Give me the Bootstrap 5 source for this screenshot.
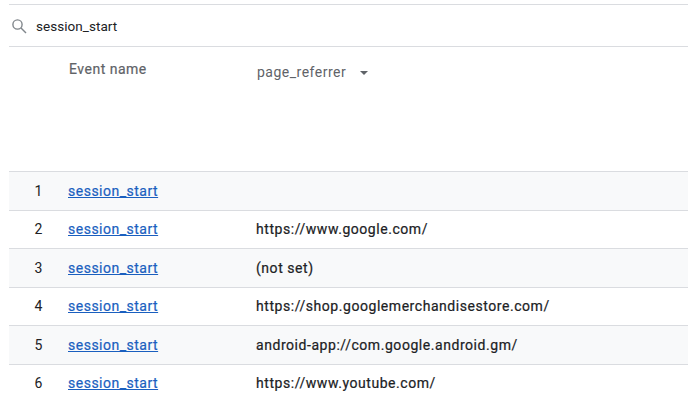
<!doctype html>
<html lang="en"><head><meta charset="utf-8">
<link href="https://cdn.jsdelivr.net/npm/bootstrap@5.3.0/dist/css/bootstrap.min.css" rel="stylesheet">
<style>
html,body{height:404px;overflow:hidden;background:#fff}
body{font-family:Roboto,"Liberation Sans",sans-serif;font-size:14px;padding:4px 0 0 9px;color:#202124}
.ga-search{height:43px;border-top:1px solid #dadce0;border-bottom:1px solid #dadce0;font-size:13.5px;letter-spacing:.05px;padding-top:1px}
.ga-search svg{margin:0 9px 0 2px}
.ga-head{height:124px;color:#5f6368;letter-spacing:.5px}
.ga-evname{width:248px;padding:14px 0 0 60px;-webkit-text-stroke:.2px #5f6368;line-height:16px}
.ga-dim{padding-top:17px;line-height:16px;letter-spacing:.5px}
.ga-caret{display:inline-block;border-left:4px solid transparent;border-right:4px solid transparent;border-top:4px solid #5f6368;margin-left:10px;vertical-align:2px}
.ga-row{height:38.5px;border-top:1px solid #dadce0;letter-spacing:.55px;padding-top:1px;-webkit-text-stroke:.2px #202124}
.ga-row.ga-alt{background:#f8f9fa}
.ga-row:last-child{border-bottom:1px solid #dadce0;height:39px}
.ga-idx{width:59px;padding-right:25px;text-align:right;flex:none;-webkit-text-stroke:0}
.ga-name{width:188px;flex:none;letter-spacing:.5px;-webkit-text-stroke:.2px #1a5fbf}
.ga-name a{color:#1a5fbf}
</style></head>
<body>
<div class="ga-search d-flex align-items-center">
<svg width="16" height="16" viewBox="0 0 16 16" fill="none" stroke="#80868b" stroke-width="1.4"><circle cx="6.5" cy="6.5" r="4.6"/><path d="M10 10l5 5"/></svg>
<span>session_start</span></div>
<div class="ga-head d-flex"><div class="ga-evname">Event name</div><div class="ga-dim">page_referrer <span class="ga-caret"></span></div></div>
<div class="ga-row ga-alt d-flex align-items-center"><div class="ga-idx">1</div><div class="ga-name"><a href="#">session_start</a></div><div></div></div>
<div class="ga-row d-flex align-items-center"><div class="ga-idx">2</div><div class="ga-name"><a href="#">session_start</a></div><div>https://www.google.com/</div></div>
<div class="ga-row ga-alt d-flex align-items-center"><div class="ga-idx">3</div><div class="ga-name"><a href="#">session_start</a></div><div>(not set)</div></div>
<div class="ga-row d-flex align-items-center"><div class="ga-idx">4</div><div class="ga-name"><a href="#">session_start</a></div><div>https://shop.googlemerchandisestore.com/</div></div>
<div class="ga-row ga-alt d-flex align-items-center"><div class="ga-idx">5</div><div class="ga-name"><a href="#">session_start</a></div><div>android-app://com.google.android.gm/</div></div>
<div class="ga-row d-flex align-items-center"><div class="ga-idx">6</div><div class="ga-name"><a href="#">session_start</a></div><div>https://www.youtube.com/</div></div>
<script src="https://cdn.jsdelivr.net/npm/bootstrap@5.3.0/dist/js/bootstrap.bundle.min.js"></script>
</body></html>
